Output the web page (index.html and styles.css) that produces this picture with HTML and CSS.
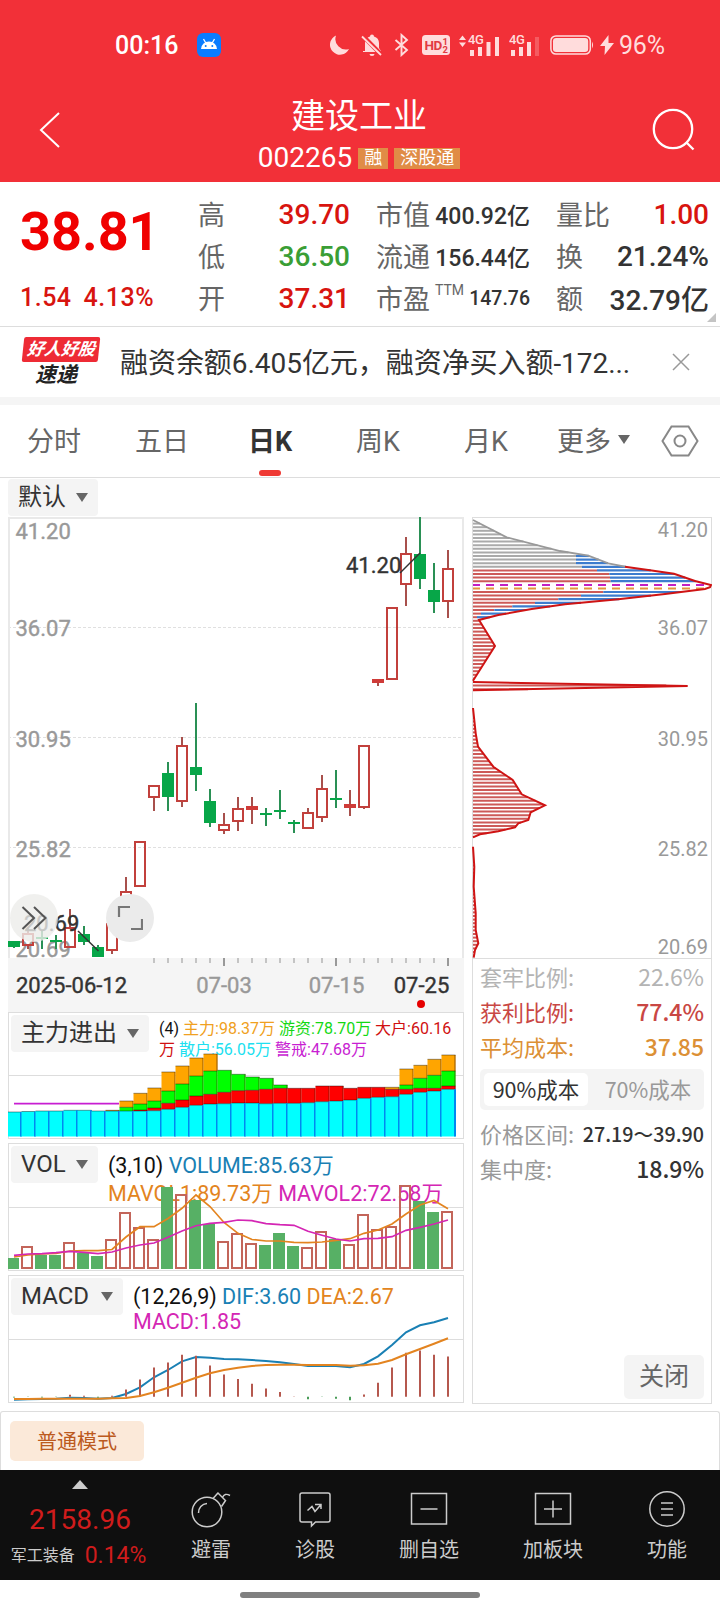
FILE: index.html
```html
<!DOCTYPE html>
<html lang="zh-CN">
<head>
    <meta charset="UTF-8">
    <meta name="viewport" content="width=device-width, initial-scale=1.0">
    <title>建设工业 002265</title>
    <link rel="stylesheet" href="styles.css">
</head>
<body>
    <header class="header">
        <div class="status">
            <span class="time">00:16</span>
            <svg class="android" width="24" height="24" viewBox="0 0 24 24"><rect width="24" height="24" rx="6" fill="#0a7cff"/><path d="M4 16a8 7.5 0 0 1 16 0z" fill="#fff"/><path d="M6.5 6l2.3 4M17.500 6l-2.300 4" stroke="#fff" stroke-width="1.300"/><circle cx="8.700" cy="13" r="1" fill="#0a7cff"/><circle cx="15.300" cy="13" r="1" fill="#0a7cff"/></svg>
            <div class="status-icons">
                <svg width="21" height="22" viewBox="0 0 21 22"><path d="M7 1.500A10 10 0 1 0 20 15A10.500 10.500 0 0 1 7 1.500z"/></svg>
                <svg width="22" height="24" viewBox="0 0 22 24"><path d="M4 18V10a7 7 0 0 1 5-6.500a2 2 0 0 1 4 0a7 7 0 0 1 5 6.500V15l2 3v1H2v-1zM8.500 21h5a2.500 2 0 0 1-5 0z"/><path d="M2 3L20.500 22" stroke="#f23038" stroke-width="4.500"/><path d="M1 3.500L20 22" stroke="#ffdcdc" stroke-width="1.800"/></svg>
                <svg width="15" height="24" viewBox="0 0 15 24"><path d="M1.500 7L13 17L7.500 22V2L13 7L1.500 17" fill="none" stroke="#ffdcdc" stroke-width="1.900"/></svg>
                <svg width="28" height="20" viewBox="0 0 28 20"><rect width="28" height="20" rx="3.500"/><text x="2.500" y="15.300" class="hd">HD</text><text x="20.500" y="9.500" class="hd-n">1</text><text x="20.500" y="18" class="hd-n">2</text></svg>
                <svg width="41" height="24" viewBox="0 0 41 24"><path d="M0 7l3.500-4.500L7 7zM0 9.500h7L3.500 14z"/><text x="9" y="11" class="net">4G</text><path d="M11 17h4v6h-4zM19 14h4v9h-4zM27.500 9h4v14h-4zM36 4h4v19h-4z"/></svg>
                <svg width="31" height="24" viewBox="0 0 31 24"><text x="0" y="11" class="net">4G</text><path d="M2 17h4v6H2zM10 14h4v9h-4zM18 9h4v14h-4z"/><path d="M26 4h4v19h-4z" opacity=".25"/></svg>
                <svg width="44" height="20" viewBox="0 0 44 20"><rect x=".9" y=".9" width="39.400" height="18.200" rx="5" fill="none" stroke="#ffdcdc" stroke-width="1.500"/><rect x="3" y="3" width="35.200" height="14" rx="3.200"/><path d="M42 6.500q2 3.500 0 7z"/></svg>
                <svg width="14" height="20" viewBox="0 0 14 20"><path d="M8.500 0L0 11h5L4.500 20L14 8H8.500z"/></svg>
                <span class="battery">96%</span>
            </div>
        </div>
        <div class="title-bar">
            <svg class="back" width="24" height="40" viewBox="0 0 24 40"><path d="M21 3L3 20L21 37" fill="none" stroke="#fff" stroke-width="2"/></svg>
            <div class="title">
                <h1>建设工业</h1>
                <div class="code"><span>002265</span><b>融</b><b>深股通</b></div>
            </div>
            <svg class="search" width="44" height="44" viewBox="0 0 44 44"><circle cx="21" cy="21" r="19.200" fill="none" stroke="#fff" stroke-width="2.300"/><path d="M34 34L41.500 41.500" stroke="#fff" stroke-width="2.300"/></svg>
        </div>
    </header>

    <section class="quote">
        <div class="price">
            <div class="now">38.81</div>
            <div class="change"><span>1.54</span><span>4.13%</span></div>
        </div>
        <dl class="col1">
            <div><dt>高</dt><dd class="red">39.70</dd></div>
            <div><dt>低</dt><dd class="green">36.50</dd></div>
            <div><dt>开</dt><dd class="red">37.31</dd></div>
        </dl>
        <dl class="col2">
            <div><dt>市值</dt><dd>400.92亿</dd></div>
            <div><dt>流通</dt><dd>156.44亿</dd></div>
            <div><dt>市盈<sup>TTM</sup></dt><dd class="small">147.76</dd></div>
        </dl>
        <dl class="col3">
            <div><dt>量比</dt><dd class="red">1.00</dd></div>
            <div><dt>换</dt><dd>21.24%</dd></div>
            <div><dt>额</dt><dd>32.79亿</dd></div>
        </dl>
        <i class="corner"></i>
    </section>

    <section class="news">
        <div class="logo"><span class="logo-top">好人好股</span><span class="logo-bottom">速递</span></div>
        <p>融资余额6.405亿元，融资净买入额-172...</p>
        <svg width="18" height="18" viewBox="0 0 18 18"><path d="M1 1L17 17M17 1L1 17" stroke="#999" stroke-width="1.500"/></svg>
    </section>

    <nav class="tabs">
        <a>分时</a>
        <a>五日</a>
        <a class="active">日K</a>
        <a>周K</a>
        <a>月K</a>
        <a class="more">更多<i class="arrow"></i></a>
        <svg width="38" height="32" viewBox="0 0 38 32"><path d="M10.500 1.500h17L36.500 16L27.500 30.500h-17L1.500 16z" fill="none" stroke="#888" stroke-width="2"/><circle cx="19" cy="16" r="5.500" fill="none" stroke="#888" stroke-width="2"/></svg>
    </nav>

    <div class="toolbar"><span class="pill">默认<i class="arrow"></i></span></div>

    <main class="board">
        <div class="left">
            <div class="kline">
                <svg id="kline" width="456" height="441" viewBox="0 0 456 441"></svg>
                <button class="round forward"><svg width="26" height="26" viewBox="0 0 26 26"><path d="M1.500 2L13 13L1.500 24M13 2L24.500 13L13 24" fill="none" stroke="#555" stroke-width="2"/></svg></button>
                <button class="round expand"><svg width="26" height="26" viewBox="0 0 26 26"><path d="M2 12V2H13M25 14V24H14" fill="none" stroke="#777" stroke-width="2.200"/></svg></button>
            </div>
            <svg id="axis" class="axis" width="456" height="54" viewBox="0 0 456 54"></svg>

            <div class="panel flow">
                <span class="pill">主力进出<i class="arrow"></i></span>
                <p><span class="c-black">(4)</span> <span class="c-gold">主力:98.37万</span> <span class="c-green">游资:78.70万</span> <span class="c-red">大户:60.16<br>万</span> <span class="c-cyan">散户:56.05万</span> <span class="c-purple">警戒:47.68万</span></p>
                <svg id="flow" width="456" height="126" viewBox="0 0 456 126"></svg>
            </div>
            <div class="panel vol">
                <span class="pill">VOL<i class="arrow"></i></span>
                <p><span class="c-black">(3,10)</span> <span class="c-blue">VOLUME:85.63万</span><br><span class="c-orange">MAVOL1:89.73万</span> <span class="c-magenta">MAVOL2:72.58万</span></p>
                <svg id="vol" width="456" height="128" viewBox="0 0 456 128"></svg>
            </div>
            <div class="panel macd">
                <span class="pill">MACD<i class="arrow"></i></span>
                <p><span class="c-black">(12,26,9)</span> <span class="c-blue">DIF:3.60</span> <span class="c-orange">DEA:2.67</span><br><span class="c-magenta">MACD:1.85</span></p>
                <svg id="macd" width="456" height="128" viewBox="0 0 456 128"></svg>
            </div>
        </div>

        <aside class="chips">
            <svg id="chips" width="240" height="442" viewBox="0 0 240 442"></svg>
            <ul>
                <li class="c-light"><span>套牢比例:</span><b>22.6%</b></li>
                <li class="c-profit"><span>获利比例:</span><b>77.4%</b></li>
                <li class="c-cost"><span>平均成本:</span><b>37.85</b></li>
            </ul>
            <div class="switch"><span class="on">90%成本</span><span>70%成本</span></div>
            <ul class="dark">
                <li><span>价格区间:</span><b class="range">27.19～39.90</b></li>
                <li><span>集中度:</span><b>18.9%</b></li>
            </ul>
            <button class="close">关闭</button>
        </aside>
    </main>

    <section class="mode"><span>普通模式</span></section>

    <footer class="bottom">
        <div class="index">
            <i class="up"></i>
            <strong>2158.96</strong>
            <p>军工装备<em>0.14%</em></p>
        </div>
        <a><svg width="40" height="40" viewBox="0 0 40 40"><circle cx="16" cy="23" r="14.800"/><path d="M7.500 24a9 9 0 0 1 8.500-9.500M22 9.500L27 4L34.500 11.500L30.500 17.500M27 4l-2 2M31.500 8.500q2-5 7.500-2"/></svg>避雷</a>
        <a><svg width="40" height="40" viewBox="0 0 40 40"><path d="M7 4H33a2 2 0 0 1 2 2V31a2 2 0 0 1-2 2H20.500L16.500 37V33H7a2 2 0 0 1-2-2V6a2 2 0 0 1 2-2z"/><path d="M12.500 21.500L17 17.500L20 22.500L26 15.500M20 15.500H26V20"/></svg>诊股</a>
        <a><svg width="40" height="40" viewBox="0 0 40 40"><rect x="2.500" y="4.500" width="35" height="30.500"/><path d="M11.500 20h17"/></svg>删自选</a>
        <a><svg width="40" height="40" viewBox="0 0 40 40"><rect x="2.500" y="4.500" width="35" height="30.500"/><path d="M11 20h18M20 11.500v17"/></svg>加板块</a>
        <a><svg width="40" height="40" viewBox="0 0 40 40"><circle cx="20" cy="20" r="17.200"/><path d="M14 14h12M14 20h12M14 26h12"/></svg>功能</a>
    </footer>
    <div class="home"><i></i></div>

    <script src="charts.js"></script>
</body>
</html>
```

FILE: styles.css
```css
* {
    box-sizing: border-box;
    margin: 0;
    padding: 0;
}

body {
    width: 720px;
    height: 1612px;
    overflow: hidden;
    background: #fff;
    color: #333;
    font-family: Roboto, "Noto Sans CJK SC", sans-serif;
}

svg {
    display: block;
    flex: none;
}

ul {
    list-style: none;
}

button {
    border: 0;
    font-family: inherit;
}

/* header */
.header {
    height: 182px;
    background: #f23038;
    color: #fff;
}

.status {
    display: flex;
    align-items: center;
    height: 90px;
    padding: 0 53px 0 115px;
}

.time {
    width: 82px;
    font-size: 25px;
    font-weight: 500;
}

.status-icons {
    display: flex;
    align-items: center;
    margin-left: 108px;
    fill: #ffdcdc;
    color: #ffdcdc;
}

.status-icons svg:nth-child(2) { margin-left: 11px; }
.status-icons svg:nth-child(3) { margin-left: 11px; }
.status-icons svg:nth-child(4) { margin-left: 13px; }
.status-icons svg:nth-child(5) { margin-left: 9px; }
.status-icons svg:nth-child(6) { margin-left: 9px; }
.status-icons svg:nth-child(7) { margin-left: 10px; }
.status-icons svg:nth-child(8) { margin-left: 6px; }

.hd {
    font-size: 13.500px;
    font-weight: 700;
    fill: #e23a42;
    letter-spacing: -0.5px;
}

.hd-n {
    font-size: 9.500px;
    font-weight: 700;
    fill: #e23a42;
}

.net {
    font-size: 13px;
    font-weight: 500;
    letter-spacing: -0.5px;
}

.battery {
    margin-left: 5px;
    font-size: 25px;
    letter-spacing: -0.2px;
}

.title-bar {
    display: flex;
    align-items: center;
    justify-content: space-between;
    height: 80px;
    padding: 0 24px 0 38px;
}

.title {
    margin-left: 4px;
    padding-top: 13px;
}

.title h1 {
    text-align: center;
    font-size: 34px;
    font-weight: 400;
    line-height: 42px;
}

.code {
    display: flex;
    align-items: center;
    gap: 6px;
    margin-top: 1px;
    font-size: 28px;
    line-height: 40px;
}

.code b {
    height: 21px;
    padding: 0 6px;
    background: #e08c46;
    font-size: 18px;
    font-weight: 400;
    line-height: 20px;
}

/* quote */
.quote {
    position: relative;
    display: flex;
    height: 145px;
    padding-top: 11px;
    border-bottom: 1px solid #ddd;
}

.price {
    width: 198px;
    padding-left: 20px;
}

.now {
    color: #f00000;
    font-size: 54px;
    font-weight: 700;
    line-height: 78px;
}

.change {
    display: flex;
    gap: 12px;
    margin-top: 12px;
    color: #d8140f;
    font-size: 25px;
    font-weight: 500;
    letter-spacing: 0.5px;
    line-height: 30px;
}

.quote dl div {
    display: flex;
    justify-content: space-between;
    align-items: center;
    height: 42px;
}

.quote dt {
    margin-top: -2px;
    color: #666;
    font-size: 27px;
    white-space: nowrap;
}

.quote dd {
    font-size: 28px;
    font-weight: 500;
    white-space: nowrap;
}

.quote .red { color: #d8140f; }
.quote .green { color: #3a9e35; }

.col1 { width: 152px; }
.col2 { width: 154px; margin-left: 26px; }
.col3 { width: 153px; margin-left: 26px; }

.quote .col2 dd { font-size: 23px; }
.quote .col2 .small { font-size: 19.500px; }

.quote sup {
    margin-left: 5px;
    font-size: 14px;
    line-height: 0;
    vertical-align: 14px;
}

.corner {
    position: absolute;
    right: 4px;
    bottom: 4px;
    border-left: 9px solid transparent;
    border-bottom: 9px solid #c4c4c4;
}

/* news */
.news {
    display: flex;
    align-items: center;
    height: 78px;
    padding: 0 30px 0 22px;
    border-bottom: 8px solid #f5f5f5;
}

.logo {
    width: 98px;
    font-style: italic;
    font-weight: 700;
}

.logo-top {
    display: block;
    width: 76px;
    height: 25px;
    margin-left: 1px;
    border-radius: 2px;
    background: #ee2b35;
    color: #fff;
    font-size: 17px;
    line-height: 24px;
    text-align: center;
    transform: skewX(-6deg);
}

.logo-bottom {
    display: block;
    padding-left: 13px;
    color: #222;
    font-size: 21px;
    line-height: 26px;
}

.news p {
    flex: 1;
    margin-top: -2px;
    font-size: 28px;
    letter-spacing: -0.05px;
    white-space: nowrap;
}

/* tabs */
.tabs {
    display: flex;
    align-items: center;
    height: 73px;
    border-bottom: 1px solid #ddd;
    color: #666;
    font-size: 27px;
}

.tabs a {
    width: 108px;
    margin-top: -3px;
    text-align: center;
}

.tabs .active {
    position: relative;
    color: #333;
    font-weight: 700;
}

.tabs .active::after {
    content: "";
    position: absolute;
    left: 43px;
    bottom: -17px;
    width: 22px;
    height: 6px;
    border-radius: 3px;
    background: #ef3a34;
}

.tabs .more {
    display: flex;
    align-items: center;
    gap: 7px;
    width: 121px;
    padding-left: 17px;
}

.arrow {
    border: 6px solid transparent;
    border-top: 9px solid #666;
    border-bottom: 0;
}

.pill {
    display: flex;
    align-items: center;
    justify-content: space-between;
    height: 37px;
    padding: 0 10px 1px;
    border-radius: 4px;
    background: #f4f4f4;
    color: #333;
    font-size: 24px;
    line-height: 36px;
    white-space: nowrap;
}

.toolbar {
    height: 39px;
    padding: 1px 8px;
}

.toolbar .pill {
    width: 90px;
}

/* charts */
.board {
    display: flex;
    justify-content: space-between;
    height: 887px;
    padding: 0 8px;
}

.left {
    width: 456px;
}

.kline {
    position: relative;
}

.kline > svg {
    overflow: visible;
}

.round {
    position: absolute;
    top: 377px;
    display: flex;
    align-items: center;
    justify-content: center;
    width: 48px;
    height: 48px;
    border-radius: 50%;
    background: #ebebeb;
}

.forward {
    left: 2px;
    background: rgba(236, 236, 234, 0.8);
}

.expand {
    left: 98px;
}

.axis {
    background: #f5f5f5;
}

.price-label,
.date {
    fill: #999;
    stroke: #999;
    stroke-width: 0.4;
    font-size: 22px;
}

.mark,
.date.strong {
    fill: #333;
    stroke: #333;
    stroke-width: 0.4;
    font-size: 22px;
}

.chip-label {
    fill: #999;
    font-size: 20px;
}

.panel {
    position: relative;
    display: flex;
    align-items: flex-start;
    gap: 10px;
    height: 128px;
    margin-bottom: 4px;
    padding: 2px;
    border: 1px solid #ddd;
}

.panel.flow {
    height: 127px;
}

.panel p {
    font-size: 21.500px;
    line-height: 28px;
    white-space: nowrap;
}

.panel svg {
    position: absolute;
    left: -1px;
    top: -1px;
}

.flow .pill { width: 138px; }
.flow p { padding-top: 3px; font-size: 16px; line-height: 21px; }
.vol .pill { width: 87px; }
.vol p { padding-top: 6px; }
.macd .pill { width: 112px; }
.macd p { padding-top: 6px; line-height: 25px; }

.c-black { color: #111; }
.c-gold { color: #f0a020; }
.c-green { color: #14d814; }
.c-red { color: #d01010; }
.c-cyan { color: #20dff0; }
.c-purple { color: #c81ed2; }
.c-blue { color: #1a80b4; }
.c-orange { color: #e38420; }
.c-magenta { color: #d426b4; }

/* chip distribution */
.chips {
    display: flex;
    flex-direction: column;
    width: 240px;
    border: 1px solid #ddd;
    border-top: 0;
}

.chips > svg {
    margin-left: -1px;
}

.chips ul {
    padding: 0 7px;
    font-size: 22px;
    font-family: "Noto Sans CJK SC", sans-serif;
}

.chips li {
    display: flex;
    justify-content: space-between;
    height: 35px;
    line-height: 35px;
}

.chips b {
    font-size: 23px;
    font-weight: 500;
}

.chips .c-light b {
    font-weight: 400;
}

.chips .range {
    font-size: 19.700px;
}

.c-light { color: #b4b4b4; }
.c-profit { color: #c94744; }
.c-cost { color: #dc9035; }

.dark { color: #999; }
.dark b { color: #333; }

.switch {
    display: flex;
    height: 41px;
    margin: 5px 7px 6px;
    padding: 4px;
    border-radius: 5px;
    background: #f4f4f4;
    color: #999;
    font: 21.500px/32px "Noto Sans CJK SC", sans-serif;
}

.switch span {
    width: 104px;
    border-radius: 5px;
    text-align: center;
}

.switch span + span {
    margin-left: 8px;
}

.switch .on {
    background: #fff;
    color: #333;
}

.close {
    width: 80px;
    height: 44px;
    margin: auto 7px 4px auto;
    border-radius: 5px;
    background: #f4f4f4;
    color: #666;
    font-size: 25px;
    line-height: 42px;
}

/* bottom */
.mode {
    height: 59px;
    margin-top: 7px;
    padding: 9px;
    border: 1px solid #ddd;
    border-bottom: 0;
    border-radius: 3px 3px 0 0;
}

.mode span {
    display: block;
    width: 134px;
    height: 40px;
    border-radius: 5px;
    background: #fbe9d9;
    color: #bc5a1e;
    font-size: 20px;
    line-height: 43px;
    text-align: center;
}

.bottom {
    display: flex;
    gap: 64px;
    height: 110px;
    background: #0f0f0f;
    color: #ccc;
}

.index {
    display: flex;
    flex-direction: column;
    align-items: center;
    width: 160px;
    margin-right: -33px;
    padding-top: 10px;
}

.up {
    border: 8px solid transparent;
    border-bottom: 9px solid #ccc;
    border-top: 0;
}

.index strong {
    margin-top: 14px;
    color: #d01c1c;
    font-size: 28px;
    font-weight: 400;
    line-height: 34px;
}

.index p {
    display: flex;
    align-items: center;
    gap: 10px;
    margin-top: 4px;
    margin-right: 3px;
    font-size: 16px;
    line-height: 30px;
}

.index em {
    color: #d01c1c;
    font-size: 23px;
    font-style: normal;
}

.bottom a {
    display: flex;
    flex-direction: column;
    align-items: center;
    padding-top: 19px;
    font-size: 20px;
    line-height: 42px;
}

.bottom a svg {
    fill: none;
    stroke: #ccc;
    stroke-width: 1.500;
}

.home {
    display: flex;
    justify-content: center;
    padding-top: 12px;
}

.home i {
    width: 240px;
    height: 6px;
    border-radius: 3px;
    background: #808080;
}
```

FILE: charts.js
```js
const STEP = 14;
const center = i => i * STEP + 6;

function rect(x, y, w, h, attrs) {
    return `<rect x="${x}" y="${y}" width="${w}" height="${h}" ${attrs}/>`;
}

function line(x1, y1, x2, y2, color, width = 1, extra = '') {
    return `<line x1="${x1}" y1="${y1}" x2="${x2}" y2="${y2}" stroke="${color}" stroke-width="${width}" ${extra}/>`;
}

function polyline(points, color, width = 1.7) {
    return `<polyline points="${points.map(p => p.join(',')).join(' ')}" fill="none" stroke="${color}" stroke-width="${width}"/>`;
}

function text(x, y, cls, str, extra = '') {
    return `<text x="${x}" y="${y}" class="${cls}" ${extra}>${str}</text>`;
}

function draw(id, parts) {
    document.getElementById(id).innerHTML = parts.join('');
}

// [direction, high, body top, body bottom, low]
const candles = [
    ['g', 424, 424, 430, 431], ['r', 410, 416, 429, 432], ['g', 414, 420, 422, 432], ['g', 418, 423, 425, 432],
    ['r', 392, 410, 431, 431], ['g', 409, 417, 425, 428], ['g', 428, 430, 440, 440], ['r', 406, 406, 434, 437],
    ['r', 360, 374, 400, 400], ['r', 324, 324, 370, 370], ['r', 268, 268, 281, 294], ['g', 245, 256, 280, 294],
    ['r', 220, 228, 285, 290], ['g', 186, 250, 258, 274], ['g', 272, 284, 306, 310], ['r', 296, 307, 314, 317],
    ['r', 280, 291, 305, 314], ['f', 280, 289, 293, 307], ['g', 291, 296, 298, 309], ['g', 273, 293, 295, 302],
    ['g', 303, 305, 307, 316], ['r', 291, 295, 312, 312], ['r', 258, 271, 301, 305], ['g', 253, 281, 283, 291],
    ['f', 273, 287, 291, 299], ['r', 228, 228, 291, 292], ['f', 162, 162, 166, 169], ['r', 90, 90, 163, 163],
    ['r', 20, 36, 68, 89], ['g', 0, 37, 62, 72], ['g', 46, 73, 85, 96], ['r', 33, 51, 85, 101]
];

function drawKline() {
    const out = [];
    [110.5, 220.5, 330.5].forEach(y => out.push(line(0, y, 456, y, '#e0e0e0', 1, 'stroke-dasharray="3 2"')));
    out.push('<path d="M1 441V1H455V441" fill="none" stroke="#e9e9e9" stroke-width="2"/>');
    [['41.20', 22], ['36.07', 119], ['30.95', 229.5], ['25.82', 340], ['20.69', 440]].forEach(([t, y]) => {
        out.push(text(7.5, y, 'price-label', t));
    });
    candles.forEach(([dir, high, top, bottom, low], i) => {
        const x = center(i);
        if (dir === 'r') {
            out.push(line(x, high, x, top, '#a8504c', 2), line(x, bottom, x, low, '#a8504c', 2));
            out.push(rect(x - 5, top + 1, 10, bottom - top - 2, 'fill="none" stroke="#c2403c" stroke-width="2"'));
        } else {
            out.push(line(x, high, x, low, dir === 'g' ? '#2a9055' : '#a8504c', 2));
            out.push(rect(x - 6, top, 12, bottom - top, `fill="${dir === 'g' ? '#07a648' : '#cf3b38'}"`));
        }
    });
    out.push(line(392, 56, 412, 36, '#333', 1.5), text(338, 55.5, 'mark', '41.20'));
    out.push(line(70, 414, 90.5, 434, '#333', 1.5), text(16, 413.5, 'mark', '20.69'));
    draw('kline', out);
}

function drawAxis() {
    const out = [];
    for (let i = 10; i < 32; i++) {
        const major = i % 8 === 7;
        out.push(line(center(i), 0, center(i), major ? 8 : 5, major ? '#999' : '#c4c4c4', 2));
    }
    out.push(text(8, 35, 'date strong', '2025-06-12'));
    out.push(text(216, 35, 'date', '07-03', 'text-anchor="middle"'));
    out.push(text(328.5, 35, 'date', '07-15', 'text-anchor="middle"'));
    out.push(text(413.5, 35, 'date strong', '07-25', 'text-anchor="middle"'));
    out.push('<circle cx="413" cy="46" r="4" fill="#e60000"/>');
    draw('axis', out);
}

// tops of the stacked bars: [gold, green, red, cyan]
const flow = [
    [100, 100, 100, 100], [99.5, 99.5, 99.5, 99.5], [99, 99, 99, 99], [99, 99, 99, 99],
    [98.3, 98.3, 98.3, 98.3], [98.3, 98.3, 98.3, 98.3], [99, 99, 99, 99], [98.3, 99, 99, 99],
    [89, 95.3, 99, 99], [81.3, 92, 98, 99], [76, 89, 96, 98.7], [60, 79, 91.3, 97.3],
    [54, 72, 88, 95.3], [46, 64, 84, 93.3], [42, 59, 82.3, 92], [58.3, 58.3, 80.3, 91.7],
    [62.3, 62.3, 78.7, 91], [65, 65, 78.3, 91], [66.3, 66.3, 77.3, 91.7], [73, 73, 76.3, 91.3],
    [76.3, 76.3, 76.3, 91.3], [76.3, 76.3, 76.3, 90.7], [74, 74, 74, 89.7], [74, 74, 74, 89],
    [76.3, 76.3, 76.3, 88], [75.3, 75.3, 75.3, 86.3], [75.3, 75.3, 75.3, 85.3], [75.3, 77.3, 77.3, 84.7],
    [57, 73, 77.3, 82.3], [53.3, 66.3, 76.3, 80.3], [47.3, 63.3, 76.3, 79], [43, 59, 74, 77.3]
];

function drawFlow() {
    const bottom = 124.5;
    const colors = ['#ffa500', '#00ff00', '#ff0000', '#00ffff'];
    const out = [line(1, 63.5, 455, 63.5, '#ddd')];
    flow.forEach((tops, i) => {
        const x = i * STEP;
        tops.forEach((top, n) => {
            const end = n < 3 ? tops[n + 1] : bottom;
            if (end - top < 0.5) return;
            out.push(rect(x - 0.5, top, STEP, end - top, `fill="${colors[n]}"`));
            out.push(line(x - 0.5, top, x + 13.5, top, 'rgba(0,0,0,.4)', 1));
        });
        out.push(line(x + 13, tops[0], x + 13, tops[3], 'rgba(70,30,0,.6)', 1));
        out.push(line(x + 13, tops[3], x + 13, bottom, '#0088f0', 2));
    });
    out.push(line(6, 91.7, 111, 91.7, '#c81ed2', 1.7));
    draw('flow', out);
}

const volume = [
    ['g', 115], ['r', 103], ['g', 112], ['g', 112], ['r', 99], ['g', 110], ['g', 113], ['r', 96],
    ['r', 69], ['r', 84], ['r', 96], ['g', 44], ['r', 51], ['g', 57], ['g', 81], ['r', 98],
    ['r', 90], ['r', 100], ['g', 102], ['g', 90], ['g', 103], ['r', 104], ['r', 88], ['g', 96],
    ['r', 101], ['r', 71], ['r', 86], ['r', 83], ['r', 42], ['g', 58], ['g', 69], ['r', 68]
];
const mavol1 = [114, 112, 111, 110.5, 108, 107.5, 107.7, 106.5, 94, 83.7, 83.7, 75.5, 65.3, 52, 63.5, 79.5, 90.3, 96.5, 98, 98, 99.3, 99.7, 99, 97.3, 95.7, 90.3, 87, 81, 71, 62, 57.5, 65.7];
const mavol2 = [112.3, 111, 110.7, 109.7, 108.3, 109.3, 110.7, 109, 105, 102, 100, 94.3, 88, 82.7, 80.3, 79.3, 77, 77.7, 80.7, 81.7, 82.3, 88.3, 92.3, 96, 98, 95.7, 95.3, 93.7, 87.3, 84.3, 81, 77];

function drawVolume() {
    const out = [line(1, 64.5, 455, 64.5, '#ddd')];
    volume.forEach(([dir, top], i) => {
        const x = i * STEP - 1;
        if (dir === 'g') {
            out.push(rect(Math.max(x, 0), top, x < 0 ? 11 : 12, 126 - top, 'fill="#57b065"'));
        } else {
            out.push(rect(x + 1, top + 1, 10, 124 - top, 'fill="none" stroke="#c3655a" stroke-width="2"'));
        }
    });
    out.push(polyline(mavol1.map((y, i) => [center(i), y]), '#e38420'));
    out.push(polyline(mavol2.map((y, i) => [center(i), y]), '#d426b4'));
    draw('vol', out);
}

const macd = [-0.7, -0.4, -0.7, -0.4, 2, 1, -1, 1, 7.3, 17.3, 29.3, 34.3, 42, 41, 31.3, 22.3, 17.7, 13, 8.3, 4.7, 0.3, -2.5, -0.3, -2, -3.5, 2.3, 14, 29.3, 44, 46.3, 42, 40.3];
const dif = [124.7, 124.3, 124, 123.7, 122.7, 123, 123.7, 123, 119, 112.3, 102.3, 95, 86.3, 82, 82.7, 84, 84.3, 85, 86, 87.3, 89, 91, 90.7, 91, 92.3, 89, 81.3, 70, 57.3, 50.3, 47.3, 43];
const dea = [124, 124, 123.7, 123.7, 123.7, 123.7, 123.7, 123.3, 123, 121, 117.3, 112.7, 107.7, 102.7, 98.3, 95, 92.7, 91, 90, 89.7, 89.7, 90, 90, 90, 90.7, 90.3, 88.7, 85, 79.3, 74, 68.7, 63.3];

function drawMacd() {
    const out = [line(1, 64.5, 455, 64.5, '#ddd')];
    out.push(polyline(dif.map((y, i) => [center(i), y]), '#1a80b4', 2));
    macd.forEach((v, i) => out.push(line(center(i), 121.7, center(i), 121.7 - v, v > 0 ? '#b5584e' : '#4a9c58', 2)));
    out.push(polyline(dea.map((y, i) => [center(i), y]), '#e38420', 2));
    draw('macd', out);
}

// outline of the chip distribution, top to bottom
const trapped = [[1, 3], [34.7, 20.3], [88, 34], [116.3, 38.7], [136.3, 46.3], [153, 49.7]];
const profit = [
    [[153, 49.7], [178, 53.3], [202, 56.7], [223, 64], [239, 68], [238, 70.3], [233, 72], [193, 77], [146.3, 82.3],
     [93, 87.3], [59.7, 92], [26.3, 98], [7, 103], [23, 129], [1, 163.7]],
    [[1, 165], [215.7, 169], [1, 173.3]],
    [[1, 191], [3.7, 216.3], [6, 229.7], [21.3, 249.7], [40.7, 263], [49.7, 277.3], [73, 288.3], [58.7, 295.3],
     [56.3, 303], [46.3, 306.3], [43, 310.3], [26.3, 314.3], [8, 317.3], [1, 320.3]],
    [[1, 329.7], [2.3, 349.7], [1.7, 369.7], [3.7, 396.3], [3.7, 413], [6.3, 426.3], [3, 433], [1.7, 440.7]]
];
// where the blue part of a row begins
const recent = { 10: 104, 11: 104, 12: 104, 13: 110, 14: 125, 15: 137.3, 16: 138, 17: 138.7, 20: 131.3, 21: 109, 22: 86.3, 23: 63, 24: 40.3, 25: 22.3, 26: 9, 27: 5 };

function edgeAt(y) {
    for (const path of [trapped, ...profit]) {
        for (let i = 1; i < path.length; i++) {
            const [x1, y1] = path[i - 1];
            const [x2, y2] = path[i];
            if (y >= y1 && y <= y2) return x1 + (x2 - x1) * (y - y1) / (y2 - y1);
        }
    }
    return 0;
}

function drawChips() {
    const out = [
        line(0, 0.5, 240, 0.5, '#ddd'),
        line(0, 441.5, 240, 441.5, '#ddd')
    ];
    for (let n = 1; n < 122; n++) {
        const y = 3 + n * 3.6;
        const x = edgeAt(y);
        if (n === 18 || n === 19 || x < 1) continue;
        out.push(line(1, y, recent[n] || x, y, n < 14 ? '#aaa' : '#cd5a58', 2));
        if (recent[n]) out.push(line(recent[n], y, x, y, '#3d7cce', 2.2));
    }
    out.push(line(1, 68, 238, 68, '#c21fc4', 2, 'stroke-dasharray="8 6" stroke-dashoffset="1"'));
    out.push(line(1, 71.6, 236, 71.6, '#e3943c', 2, 'stroke-dasharray="8 6" stroke-dashoffset="1"'));
    out.push(polyline(trapped, '#999', 1.8));
    profit.forEach(p => out.push(polyline(p, '#cf1414', 2)));
    [['41.20', 20], ['36.07', 118], ['30.95', 229], ['25.82', 339], ['20.69', 437]].forEach(([t, y]) => {
        out.push(text(236, y, 'chip-label', t, 'text-anchor="end"'));
    });
    draw('chips', out);
}

drawKline();
drawAxis();
drawFlow();
drawVolume();
drawMacd();
drawChips();
```
